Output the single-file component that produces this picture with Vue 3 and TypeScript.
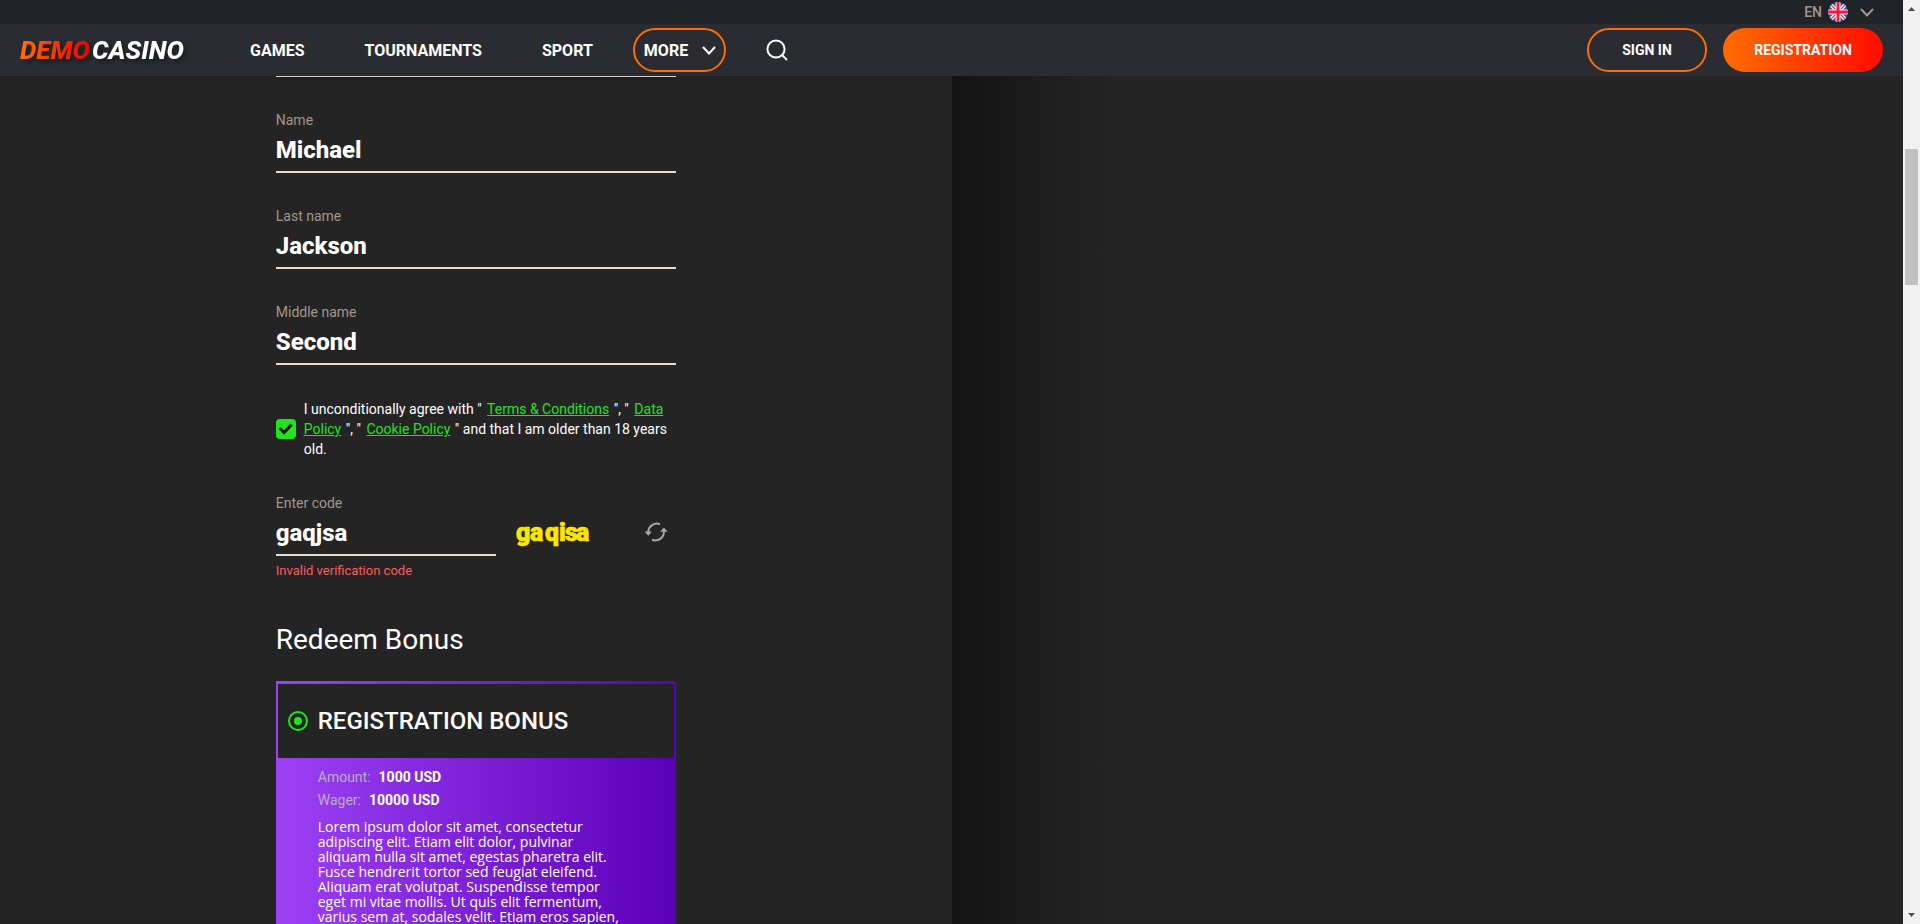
<script setup lang="ts">
import { reactive, ref } from 'vue'

interface Field {
  id: string
  label: string
  value: string
}

const links: string[] = ['GAMES', 'TOURNAMENTS', 'SPORT']

const fields = reactive<Field[]>([
  { id: 'first-name', label: 'Name', value: 'Michael' },
  { id: 'last-name', label: 'Last name', value: 'Jackson' },
  { id: 'middle-name', label: 'Middle name', value: 'Second' },
])

const agreed = ref(true)
const code = ref('gaqjsa')
const bonus = ref('registration')
</script>

<template>
  <div class="shell">
    <div class="page">
      <header class="header">
        <div class="topbar">
          <button type="button" class="lang">
            <span>EN</span>
            <svg class="flag" viewBox="0 0 20 20" aria-hidden="true">
              <defs><clipPath id="round"><circle cx="10" cy="10" r="10" /></clipPath></defs>
              <g clip-path="url(#round)">
                <rect width="20" height="20" fill="#1c55b8" />
                <path d="M0 0L20 20M20 0L0 20" stroke="#f0f0f0" stroke-width="4" />
                <path d="M0 0L20 20M20 0L0 20" stroke="#f5284b" stroke-width="1.2" />
                <path d="M10 0V20M0 10H20" stroke="#f0f0f0" stroke-width="5" />
                <path d="M10 0V20M0 10H20" stroke="#ff1439" stroke-width="2.8" />
              </g>
            </svg>
            <svg class="chevron" viewBox="0 0 14 9" aria-hidden="true"><path d="M1 1l6 6.5L13 1" /></svg>
          </button>
        </div>
        <div class="mainbar">
          <a href="#" class="logo"><span class="logo-demo">DEMO</span><span>CASINO</span></a>
          <nav class="nav">
            <a v-for="link in links" :key="link" href="#" class="nav-link">{{ link }}</a>
          </nav>
          <button type="button" class="more">
            <span>MORE</span>
            <svg class="chevron" viewBox="0 0 14 9" aria-hidden="true"><path d="M1 1l6 6.5L13 1" /></svg>
          </button>
          <button type="button" class="search" aria-label="Search">
            <svg viewBox="0 0 22 22" aria-hidden="true"><circle cx="10" cy="10" r="8.6" /><path d="M16 16l5 5" /></svg>
          </button>
          <div class="account">
            <button type="button" class="btn sign-in">SIGN IN</button>
            <button type="button" class="btn register">REGISTRATION</button>
          </div>
        </div>
      </header>

      <main class="columns">
        <section class="form-side">
          <form class="form" @submit.prevent>
            <div class="scrolled-rule"></div>
            <div v-for="field in fields" :key="field.id" class="field">
              <label :for="field.id">{{ field.label }}</label>
              <input :id="field.id" v-model="field.value" type="text" autocomplete="off" spellcheck="false" />
            </div>

            <div class="agree">
              <input id="agree" v-model="agreed" type="checkbox" class="tick" />
              <label for="agree">I unconditionally agree with " <a href="#">Terms &amp; Conditions</a> ", " <a href="#">Data Policy</a> ", " <a href="#">Cookie Policy</a> " and that I am older than 18 years old.</label>
            </div>

            <div class="code-row">
              <div class="field code-field">
                <label for="code">Enter code</label>
                <input id="code" v-model="code" type="text" autocomplete="off" spellcheck="false" aria-describedby="code-error" />
              </div>
              <svg class="captcha" viewBox="0 0 80 32" role="img" aria-label="Captcha">
                <text x="2 16 31 45 51 62" y="23">gaqisa</text>
              </svg>
              <button type="button" class="refresh" aria-label="New code">
                <svg viewBox="0 0 24 20" aria-hidden="true">
                  <path class="arc" d="M16 2.300A8.500 8.500 0 0 0 4.300 10M8 17.700A8.500 8.500 0 0 0 19.900 9.500" />
                  <path class="tip" d="M0.500 9.600H8L4.300 13.800zM16 9.800H23.600L19.900 5.400z" />
                </svg>
              </button>
            </div>
            <p id="code-error" class="error">Invalid verification code</p>

            <h2 class="heading">Redeem Bonus</h2>
            <article class="bonus">
              <label class="bonus-head" for="bonus-registration">
                <input id="bonus-registration" v-model="bonus" type="radio" name="bonus" value="registration" class="dot" />
                <span>REGISTRATION BONUS</span>
              </label>
              <div class="bonus-body">
                <dl>
                  <div><dt>Amount:</dt><dd>1000 USD</dd></div>
                  <div><dt>Wager:</dt><dd>10000 USD</dd></div>
                </dl>
                <p>Lorem ipsum dolor sit amet, consectetur adipiscing elit. Etiam elit dolor, pulvinar aliquam nulla sit amet, egestas pharetra elit. Fusce hendrerit tortor sed feugiat eleifend. Aliquam erat volutpat. Suspendisse tempor eget mi vitae mollis. Ut quis elit fermentum, varius sem at, sodales velit. Etiam eros sapien,</p>
              </div>
            </article>
          </form>
        </section>
        <aside class="art-side"></aside>
      </main>
    </div>

    <div class="scrollbar" aria-hidden="true">
      <svg viewBox="0 0 17 17"><path d="M5 11h7L8.500 7z" /></svg>
      <div class="track"><div class="thumb"></div></div>
      <svg viewBox="0 0 17 17"><path d="M5 6h7L8.500 10z" /></svg>
    </div>
  </div>
</template>

<style>
html,
body {
  background: #242424;
}
</style>

<style scoped>
.shell {
  display: grid;
  grid-template-columns: minmax(0, 1fr) 17px;
  height: 100vh;
  overflow: hidden;
  background: #242424;
  color: #fff;
  font-family: Roboto, "Liberation Sans", sans-serif;
  font-size: 14px;
}
.shell *,
.shell *::before {
  box-sizing: border-box;
}
.page {
  display: flex;
  flex-direction: column;
  min-height: 0;
  overflow: hidden;
}
button {
  padding: 0;
  border: 0;
  background: none;
  color: inherit;
  font: inherit;
  cursor: pointer;
}
svg {
  display: block;
}

/* Header */
.header {
  flex: none;
  box-shadow: 0 2px 8px rgba(0, 0, 0, 0.15);
}
.topbar {
  display: flex;
  justify-content: flex-end;
  height: 24px;
  padding-right: 29px;
  background: #202328;
}
.lang {
  display: flex;
  align-items: center;
  color: #a1978f;
  font-weight: 500;
}
.flag {
  width: 20px;
  height: 20px;
  margin: 0 12px 0 6px;
}
.chevron {
  width: 14px;
  height: 9px;
  fill: none;
  stroke: currentColor;
  stroke-width: 2;
}
.mainbar {
  display: flex;
  align-items: center;
  height: 52px;
  padding: 0 20px;
  background: #2b2c32;
  font-weight: 700;
}
.logo {
  display: flex;
  gap: 2px;
  width: 170px;
  color: #fff;
  font-size: 26px;
  font-style: italic;
  font-weight: 800;
  line-height: 44px;
  text-decoration: none;
  filter: drop-shadow(3px 3px 2px rgba(0, 0, 0, 0.4));
}
.logo-demo {
  background: linear-gradient(90deg, #ff7000, #f00000);
  background-clip: text;
  color: transparent;
}
.nav {
  display: flex;
  gap: 60px;
  margin: 0 40px 0 60px;
}
.nav-link {
  color: #fff;
  font-size: 16px;
  text-decoration: none;
}
.more {
  display: flex;
  align-items: center;
  gap: 14px;
  height: 44px;
  padding: 0 8px 0 9px;
  border: 2px solid #ff6d00;
  border-radius: 22px;
  font-size: 16px;
  font-weight: 700;
}
.search {
  margin-left: 40px;
}
.search svg {
  width: 22px;
  height: 22px;
  fill: none;
  stroke: #fff;
  stroke-width: 2;
}
.account {
  display: flex;
  gap: 16px;
  margin-left: auto;
}
.btn {
  height: 44px;
  border-radius: 22px;
  font-weight: 700;
}
.sign-in {
  width: 120px;
  border: 2px solid #ff6d00;
}
.register {
  width: 160px;
  background: linear-gradient(90deg, #ff6d00, #ff0c00);
}

/* Form */
.columns {
  display: grid;
  flex: 1;
  grid-template-columns: 1fr 1fr;
  min-height: 0;
}
.form-side {
  min-height: 0;
}
.form {
  width: 400px;
  margin: 0 auto;
}
.scrolled-rule {
  height: 1px;
  background: #d6d0ce;
}
.field {
  display: flex;
  flex-direction: column;
  justify-content: flex-end;
  height: 96px;
}
.field label {
  color: #a1968a;
  line-height: 20px;
}
.field input {
  width: 100%;
  height: 43px;
  padding: 0 0 1px;
  border: 0;
  border-bottom: 2px solid #e0dbd5;
  border-radius: 0;
  outline: 0;
  background: none;
  color: #fff;
  font: 800 24px Roboto, "Liberation Sans", sans-serif;
}
.agree {
  display: flex;
  align-items: center;
  gap: 8px;
  margin-top: 34px;
}
.agree label {
  line-height: 20px;
}
.agree a {
  margin: 0 1px 0 2px;
  color: #20e51a;
}
.tick {
  display: grid;
  flex: none;
  place-items: center;
  width: 20px;
  height: 20px;
  margin: 0;
  appearance: none;
  border: 2px solid #20e51a;
  border-radius: 4px;
}
.tick:checked {
  background: #20e51a;
}
.tick:checked::before {
  width: 14px;
  height: 12px;
  background: #101510;
  clip-path: polygon(0 50%, 14% 34%, 36% 62%, 84% 4%, 100% 20%, 38% 98%);
  content: "";
}
.code-row {
  display: flex;
  align-items: flex-end;
  margin-top: 1px;
}
.code-field {
  width: 220px;
}
.captcha {
  width: 80px;
  height: 32px;
  margin: 0 0 6px 18px;
}
.captcha text {
  fill: #ffe600;
  stroke: #ffe600;
  stroke-width: 0.6;
  font: 900 25px Roboto, sans-serif;
}
.refresh {
  margin: 0 8px 14px auto;
}
.refresh svg {
  width: 24px;
  height: 20px;
}
.arc {
  fill: none;
  stroke: #a8a8a8;
  stroke-width: 2;
}
.tip {
  fill: #a8a8a8;
}
.error {
  margin: 5px 0 0;
  color: #ff5a5a;
  font-size: 13px;
  line-height: 20px;
}
.heading {
  margin: 42px 0 24px;
  font-size: 28px;
  font-weight: 400;
  line-height: 34px;
}

/* Bonus card */
.bonus {
  padding: 3px 2px 0;
  background: linear-gradient(90deg, #9c41f5, #5b00b9);
}
.bonus-head {
  display: flex;
  align-items: center;
  gap: 10px;
  height: 74px;
  padding-left: 10px;
  background: #242424;
  font-size: 24px;
  font-weight: 500;
}
.dot {
  display: grid;
  flex: none;
  place-items: center;
  width: 20px;
  height: 20px;
  margin: 0;
  appearance: none;
  border: 2px solid #20e51a;
  border-radius: 50%;
}
.dot:checked::before {
  width: 8px;
  height: 8px;
  border-radius: 50%;
  background: #20e51a;
  content: "";
}
.bonus-body {
  padding: 8px 50px 20px 40px;
}
.bonus-body dl {
  margin: 0;
  line-height: 23px;
}
.bonus-body dl div {
  display: flex;
  gap: 8px;
}
.bonus-body dt {
  color: #b9b0bd;
}
.bonus-body dd {
  margin: 0;
  font-weight: 700;
}
.bonus-body p {
  margin: 7px 0 0;
  font-family: "Open Sans", "Noto Sans", sans-serif;
  line-height: 15px;
}

.art-side {
  background: linear-gradient(90deg, #141414 0, #151515 24px, #1f1f1f 100px, #242424 170px);
}

/* Scrollbar rail */
.scrollbar {
  display: flex;
  flex-direction: column;
  background: #f1f1f1;
}
.scrollbar svg {
  flex: none;
  width: 17px;
  height: 17px;
  fill: #505050;
}
.track {
  flex: 1;
  padding: 132px 2px 0;
}
.thumb {
  height: 136px;
  background: #c1c1c1;
}
</style>
